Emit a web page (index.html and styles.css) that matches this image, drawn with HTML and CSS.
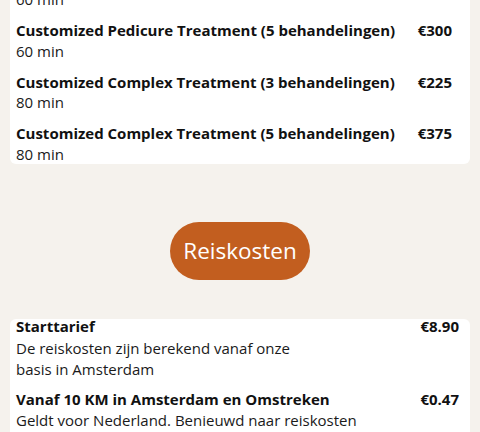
FILE: index.html
```html
<!DOCTYPE html>
<html lang="nl">
<head>
<meta charset="utf-8">
<title>Prijzen</title>
<link rel="stylesheet" href="styles.css">
</head>
<body>
<main class="page">
  <section class="card card-treatments">
    <div class="item">
      <div class="info">
        <div class="name">Customized Pedicure Treatment (3 behandelingen)</div>
        <div class="desc">60 min</div>
      </div>
      <div class="price">€190</div>
    </div>
    <div class="item">
      <div class="info">
        <div class="name">Customized Pedicure Treatment (5 behandelingen)</div>
        <div class="desc">60 min</div>
      </div>
      <div class="price">€300</div>
    </div>
    <div class="item">
      <div class="info">
        <div class="name">Customized Complex Treatment (3 behandelingen)</div>
        <div class="desc">80 min</div>
      </div>
      <div class="price">€225</div>
    </div>
    <div class="item">
      <div class="info">
        <div class="name">Customized Complex Treatment (5 behandelingen)</div>
        <div class="desc">80 min</div>
      </div>
      <div class="price">€375</div>
    </div>
  </section>

  <div class="heading-wrap">
    <h2 class="pill">Reiskosten</h2>
  </div>

  <section class="card card-travel">
    <div class="item">
      <div class="info">
        <div class="name">Starttarief</div>
        <div class="desc">De reiskosten zijn berekend vanaf onze<br>basis in Amsterdam</div>
      </div>
      <div class="price">€8.90</div>
    </div>
    <div class="item">
      <div class="info">
        <div class="name">Vanaf 10 KM in Amsterdam en Omstreken</div>
        <div class="desc">Geldt voor Nederland. Benieuwd naar reiskosten<br>buiten deze regio? Neem contact met ons op.</div>
      </div>
      <div class="price">€0.47</div>
    </div>
  </section>
</main>
</body>
</html>
```
FILE: styles.css
```css
html, body {
  margin: 0;
  padding: 0;
}
body {
  background: #f5f2ed;
  font-family: "Open Sans", "Noto Sans", sans-serif;
  color: #1a1a1a;
  height: 432px;
  overflow: hidden;
}
.page {
  padding: 0 10px;
}
.card {
  background: #ffffff;
  border-radius: 6px;
}
.item {
  display: flex;
  justify-content: space-between;
  align-items: flex-start;
  gap: 16px;
  font-size: 15px;
}
.name {
  font-weight: 700;
  color: #111;
}
.price {
  font-weight: 700;
  color: #111;
  white-space: nowrap;
}
.card-treatments {
  margin-top: -41.5px;
  padding: 10px 18px 0 6px;
  display: flex;
  flex-direction: column;
  gap: 10.5px;
}
.card-treatments .item {
  line-height: 20.5px;
}
.heading-wrap {
  display: flex;
  justify-content: center;
  margin-top: 58px;
}
.pill {
  margin: 0;
  background: #c25e1f;
  color: #ffffff;
  font-weight: 400;
  font-size: 22.5px;
  height: 58px;
  line-height: 58px;
  padding: 0 13.5px;
  border-radius: 29px;
}
.card-travel {
  margin-top: 39px;
  padding: 0 11px 10px 6px;
  display: flex;
  flex-direction: column;
  gap: 8px;
}
.card-travel .item {
  line-height: 21.5px;
}
.card-travel .item:first-child {
  margin-top: -3px;
}
```
